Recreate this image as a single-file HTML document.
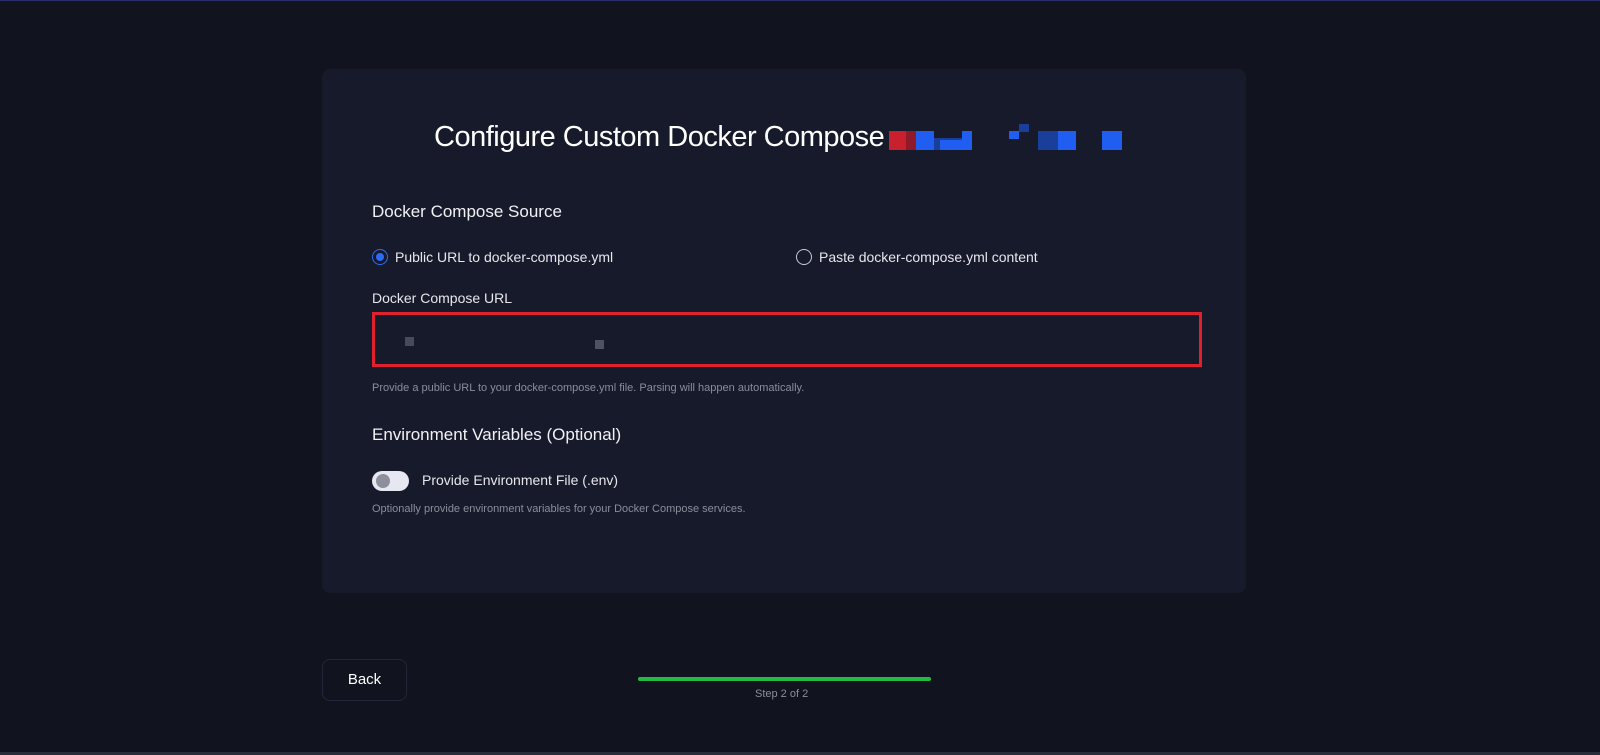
<!DOCTYPE html>
<html><head><style>
*{margin:0;padding:0;box-sizing:border-box}
body{width:1600px;height:755px;background:#11131f;font-family:"Liberation Sans",sans-serif;position:relative;overflow:hidden;color:#e8e9ee}
.top{position:absolute;left:0;top:0;width:1600px;height:1px;background:#2a2f6a}
.bot{position:absolute;left:0;top:752px;width:1600px;height:3px;background:#2a2d3a}
.card{position:absolute;left:322px;top:69px;width:924px;height:524px;background:#171a2a;border-radius:8px}
.abs{position:absolute;white-space:nowrap}
h1{font-weight:400;font-size:29px;letter-spacing:-0.5px;color:#fff}
.px{position:absolute}
</style></head><body>
<div class="top"></div>
<div class="card"></div>
<div class="abs" style="left:434px;top:121px"><h1>Configure Custom Docker Compose</h1></div>
<div class="px" style="left:889px;top:131px;width:17px;height:19px;background:#c8202c"></div>
<div class="px" style="left:906px;top:131px;width:10px;height:19px;background:#8e1a2a"></div>
<div class="px" style="left:916px;top:131px;width:18px;height:19px;background:#1f5ef0"></div>
<div class="px" style="left:934px;top:138px;width:30px;height:12px;background:#1a3f9a"></div>
<div class="px" style="left:940px;top:140px;width:22px;height:10px;background:#1f5ef0"></div>
<div class="px" style="left:962px;top:131px;width:10px;height:19px;background:#1f5ef0"></div>
<div class="px" style="left:1009px;top:131px;width:10px;height:8px;background:#1f5ef0"></div>
<div class="px" style="left:1019px;top:124px;width:10px;height:8px;background:#1a3f9a"></div>
<div class="px" style="left:1038px;top:131px;width:38px;height:19px;background:#1a3f9a"></div>
<div class="px" style="left:1058px;top:131px;width:18px;height:19px;background:#1f5ef0"></div>
<div class="px" style="left:1102px;top:131px;width:20px;height:19px;background:#1f5ef0"></div>

<div class="abs" style="left:372px;top:202px;font-size:17px;color:#f0f1f5">Docker Compose Source</div>
<div class="abs" style="left:372px;top:249px;width:16px;height:16px;border:1.5px solid #2f6bf0;border-radius:50%"><div style="position:absolute;left:2.5px;top:2.5px;width:8px;height:8px;border-radius:50%;background:#2f6bf0"></div></div>
<div class="abs" style="left:395px;top:249px;font-size:14px;color:#e6e7ec">Public URL to docker-compose.yml</div>
<div class="abs" style="left:796px;top:249px;width:16px;height:16px;border:1.5px solid #c8cad2;border-radius:50%"></div>
<div class="abs" style="left:819px;top:249px;font-size:14px;color:#e6e7ec">Paste docker-compose.yml content</div>
<div class="abs" style="left:372px;top:290px;font-size:14px;color:#e6e7ec">Docker Compose URL</div>
<div class="abs" style="left:372px;top:312px;width:830px;height:55px;border:3px solid #e0202c;background:#171a2a"></div>
<div class="px" style="left:405px;top:337px;width:9px;height:9px;background:#454a5c"></div>
<div class="px" style="left:595px;top:340px;width:9px;height:9px;background:#4e5262"></div>
<div class="abs" style="left:372px;top:382px;font-size:11px;color:#8a8d9a">Provide a public URL to your docker-compose.yml file. Parsing will happen automatically.</div>
<div class="abs" style="left:372px;top:425px;font-size:17px;color:#f0f1f5">Environment Variables (Optional)</div>
<div class="abs" style="left:372px;top:471px;width:37px;height:20px;border-radius:10px;background:#e6e7f0"><div style="position:absolute;left:4px;top:3px;width:14px;height:14px;border-radius:50%;background:#8d8f9c"></div></div>
<div class="abs" style="left:422px;top:472px;font-size:14px;color:#e6e7ec">Provide Environment File (.env)</div>
<div class="abs" style="left:372px;top:503px;font-size:11px;color:#8a8d9a">Optionally provide environment variables for your Docker Compose services.</div>

<div class="abs" style="left:322px;top:659px;width:85px;height:42px;border:1px solid #23263a;border-radius:8px;font-size:15px;color:#fff;text-align:center;line-height:40px">Back</div>
<div class="px" style="left:638px;top:677px;width:293px;height:4px;border-radius:2px;background:#22bb44"></div>
<div class="abs" style="left:755px;top:688px;font-size:11px;color:#8a8d9a">Step 2 of 2</div>
<div class="bot"></div>
</body></html>
